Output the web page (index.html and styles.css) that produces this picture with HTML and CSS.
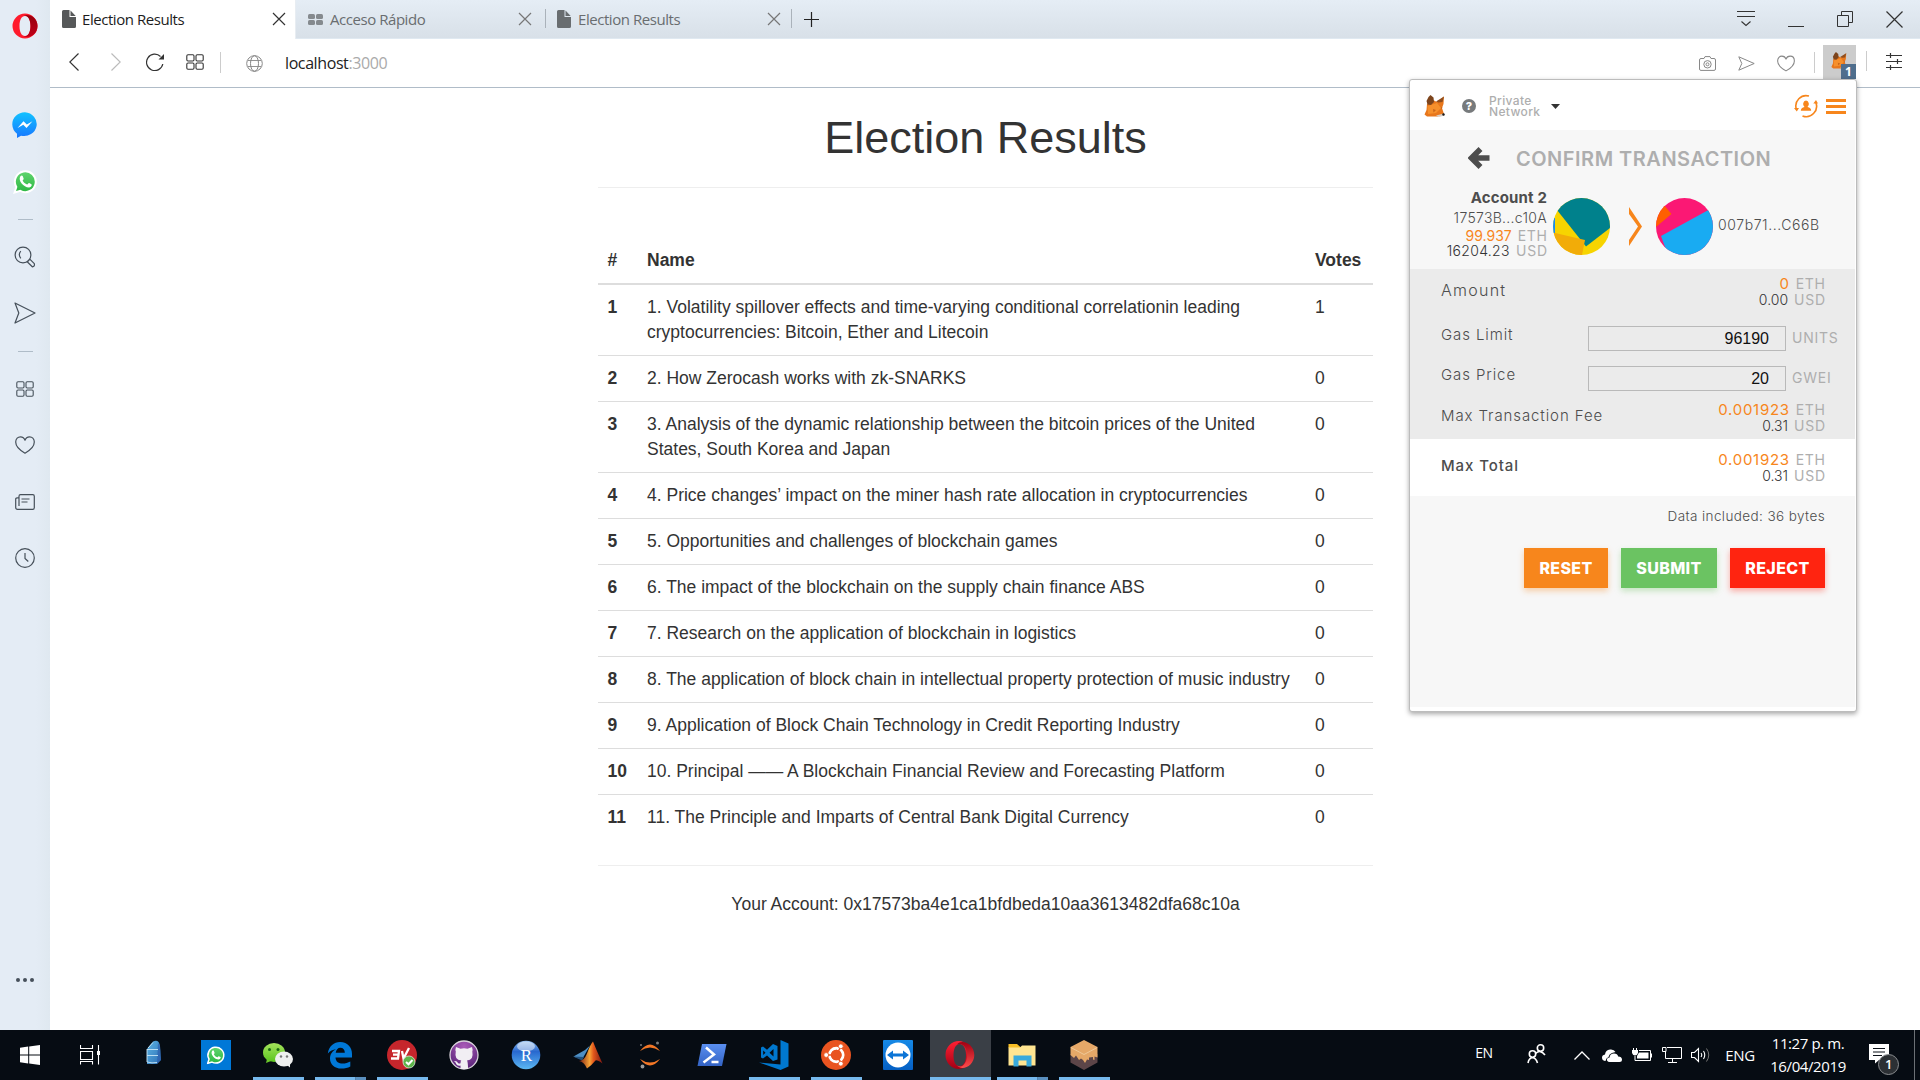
FILE: index.html
```html
<!DOCTYPE html>
<html lang="es">
<head>
<meta charset="utf-8">
<title>Election Results</title>
<link rel="stylesheet" href="styles.css">
</head>
<body>
<svg class="defs" width="0" height="0" aria-hidden="true">
  <defs>
    <linearGradient id="gMsg" x1="0" y1="0" x2="0" y2="1"><stop offset="0" stop-color="#12c2ff"/><stop offset="1" stop-color="#1877ff"/></linearGradient>
    <linearGradient id="gWa" x1="0" y1="0" x2="0" y2="1"><stop offset="0" stop-color="#62d56f"/><stop offset="1" stop-color="#2cb743"/></linearGradient>
    <linearGradient id="gOpR" x1="0" y1="0" x2="0" y2="1"><stop offset="0" stop-color="#96000e"/><stop offset="1" stop-color="#c00018"/></linearGradient>
    <linearGradient id="gOpT" x1="0" y1="0" x2="0" y2="1"><stop offset="0" stop-color="#ff2033"/><stop offset="1" stop-color="#a30014"/></linearGradient>
    <linearGradient id="gOpS" x1="0" y1="0" x2="0" y2="1"><stop offset="0" stop-color="#a00012"/><stop offset="1" stop-color="#ff4b4b"/></linearGradient>
    <linearGradient id="gTower" x1="0" y1="0" x2="1" y2="1"><stop offset="0" stop-color="#5db4e4"/><stop offset="1" stop-color="#2c6fb5"/></linearGradient>
    <linearGradient id="gWx" x1="0" y1="0" x2="0" y2="1"><stop offset="0" stop-color="#a5e45c"/><stop offset="1" stop-color="#5bc41f"/></linearGradient>
    <radialGradient id="gGit" cx=".5" cy=".2" r=".8"><stop offset="0" stop-color="#a95ab8"/><stop offset="1" stop-color="#5a2479"/></radialGradient>
    <linearGradient id="gR" x1="0" y1="0" x2="0" y2="1"><stop offset="0" stop-color="#8fbcec"/><stop offset=".38" stop-color="#2868cf"/><stop offset="1" stop-color="#5cb8f2"/></linearGradient>
    <linearGradient id="gMat" x1="0" y1="0" x2="1" y2="0"><stop offset="0" stop-color="#7a1c10"/><stop offset=".45" stop-color="#f7a437"/><stop offset=".62" stop-color="#e2571c"/><stop offset="1" stop-color="#7d1510"/></linearGradient>
    <linearGradient id="gPs" x1="0" y1="0" x2="0" y2="1"><stop offset="0" stop-color="#5a8ff0"/><stop offset="1" stop-color="#3363c4"/></linearGradient>
    <linearGradient id="gTv" x1="0" y1="0" x2="0" y2="1"><stop offset="0" stop-color="#1689e6"/><stop offset="1" stop-color="#0560c4"/></linearGradient>
    <symbol id="doc" viewBox="0 0 14 18"><path fill="currentColor" d="M1.500 0H7.500V7H14V16.500Q14 18 12.500 18H1.500Q0 18 0 16.500V1.500Q0 0 1.500 0Z"/><path fill="currentColor" d="M8.500 .5V6H13.700Z"/></symbol>
    <symbol id="close" viewBox="0 0 14 14"><path d="M1 1 13 13M13 1 1 13" fill="none" stroke="currentColor" stroke-width="1.200"/></symbol>
    <symbol id="tiles" viewBox="0 0 18 16"><g fill="none" stroke="currentColor" stroke-width="1.100"><rect x=".8" y=".8" width="7.200" height="6.200" rx="1.200"/><rect x="10" y=".8" width="7.200" height="6.200" rx="1.200"/><rect x=".8" y="9" width="7.200" height="6.200" rx="1.200"/><rect x="10" y="9" width="7.200" height="6.200" rx="1.200"/></g></symbol>
    <symbol id="heart" viewBox="0 0 20 18"><path d="M10 17.200C6 15 .7 10.500 .7 6.100C.7 2.600 3 .8 5.400 .8C7.600 .8 9.300 2 10 4.200C10.700 2 12.400 .8 14.600 .8C17 .8 19.300 2.600 19.300 6.100C19.300 10.500 14 15 10 17.200Z" fill="none" stroke="currentColor" stroke-width="1.200" stroke-linejoin="round"/></symbol>
    <symbol id="send" viewBox="0 0 22 22"><path d="M1 1 21 11 1 21 4.800 11Z" fill="none" stroke="currentColor" stroke-width="1.200" stroke-linejoin="round"/></symbol>
    <symbol id="fox" viewBox="0 0 21 22"><path fill="#e8771c" d="M3 9 9 5 13 7 20 1.500 19.500 9 18 13 20 19 14 21.500 3 21.500 .5 19.500 2.500 15Z"/><path fill="#f6902c" d="M3.500 11 13 8 17 13 12 18 4 19Z"/><path fill="#7c441c" d="M6.500 0 9.500 2.500 10 7 7 10 3.500 9.500 2.500 6 4.500 2Z"/><path fill="#8f4d1d" d="M20 1.500 18.500 7 14.500 7.500 12 6.500Z"/><path fill="#c9661c" d="M9 14 12 15 9.500 17.500ZM17 12 18.500 12.500 17 14.500Z"/><path fill="#d8cfc8" d="M12 20.500 19 18.800 20.500 20.500 15 22Z"/><circle cx="19.500" cy="19.500" r="1.200" fill="#1a1a1a"/></symbol>
    <symbol id="waGlyph" viewBox="0 0 24 24"><path d="M1.500 22.500 3.200 17.200A10 10 0 1 1 7 20.900Z" fill="url(#gWa)" stroke="#fff" stroke-width="1.900"/><path fill="#fff" d="M7.100 6.900C8 5.900 8.900 5.900 9.300 6.800L10.200 9C10.500 9.900 9.200 10.400 9.300 11C10.200 13 11.700 14.100 13.500 14.800C14.200 14.900 14.700 13.300 15.500 13.500L17.700 14.600C18.500 15.100 17.500 17.500 15.500 17.700C10.500 17.900 4.300 11 7.100 6.900Z"/></symbol>
  </defs>
</svg>

<div class="screen">
  <aside class="sidebar">
    <div class="side-logo"><svg width="26" height="26" viewBox="0 0 26 26"><path fill="#ff1b2d" fill-rule="evenodd" d="M13 .5A12.500 12.500 0 1 0 13 25.500A12.500 12.500 0 1 0 13 .5ZM13 3C16.500 3 18.500 7 18.500 13S16.500 23 13 23S7.500 19 7.500 13S9.500 3 13 3Z"/><path fill="url(#gOpR)" d="M11.500 2.500C15.500 .8 25.500 3 25.500 13S15.500 25.200 11.500 23.500C16 24 18.500 19 18.500 13S16 2 11.500 2.500Z"/></svg></div>
    <div class="side-item"><svg width="26" height="26" viewBox="0 0 26 26"><path fill="url(#gMsg)" d="M13 .3A12.600 11.900 0 1 1 9 23.700L5 26V21.700A12 12 0 0 1 .3 12.500A12.600 12 0 0 1 13 .3Z"/><path fill="#fff" d="M5.500 16 11.500 9.300 14.800 12.500 20.500 9.300 14.500 16 11.300 12.800Z"/></svg></div>
    <div class="side-item"><svg width="25" height="25"><use href="#waGlyph"/></svg></div>
    <div class="side-rule"></div>
    <div class="side-item"><svg width="22" height="22" viewBox="0 0 22 22"><g fill="none" stroke="currentColor" stroke-width="1.200"><circle cx="9" cy="9" r="7.900"/><path d="M6.800 5.200Q3.800 8.500 6.800 12.300M13.200 15.800 15.800 13.200 20.300 17.700Q21 20.400 18.300 20.800Z" stroke-linejoin="round"/></g></svg></div>
    <div class="side-item"><svg width="22" height="22"><use href="#send"/></svg></div>
    <div class="side-rule"></div>
    <div class="side-item"><svg width="18" height="16"><use href="#tiles"/></svg></div>
    <div class="side-item"><svg width="20" height="18"><use href="#heart"/></svg></div>
    <div class="side-item"><svg width="20" height="16" viewBox="0 0 20 16"><path d="M4 12V2.200Q4 .7 5.500 .7H17.800Q19.300 .7 19.300 2.200V13.800Q19.300 15.300 17.800 15.300H2.500Q.7 15.300 .7 13.500V5Q.7 3.700 4 3.700M6.500 5H14.500M6.500 8H12.500" fill="none" stroke="currentColor" stroke-width="1.200"/></svg></div>
    <div class="side-item"><svg width="20" height="20" viewBox="0 0 20 20"><g fill="none" stroke="currentColor" stroke-width="1.200"><circle cx="10" cy="10" r="9.300"/><path d="M10 5V10.500L13.300 13.500"/></g></svg></div>
    <div class="side-more"><svg width="18" height="4" viewBox="0 0 18 4"><g fill="currentColor"><circle cx="2" cy="2" r="2"/><circle cx="9" cy="2" r="2"/><circle cx="16" cy="2" r="2"/></g></svg></div>
  </aside>

  <div class="browser">
    <div class="tabs">
      <div class="tab tab-active"><svg width="14" height="18"><use href="#doc"/></svg><span>Election Results</span><svg class="tab-close" width="14" height="14"><use href="#close"/></svg></div>
      <div class="tab tab-speed"><svg width="15" height="11" viewBox="0 0 15 11"><g fill="#858a8e"><rect width="7" height="5" rx="1.500"/><rect x="8" width="7" height="5" rx="1.500"/><rect y="6" width="7" height="5" rx="1.500"/><rect x="8" y="6" width="7" height="5" rx="1.500"/></g></svg><span>Acceso Rápido</span><svg class="tab-close" width="14" height="14"><use href="#close"/></svg></div>
      <div class="tab tab-last"><svg width="14" height="18"><use href="#doc"/></svg><span>Election Results</span><svg class="tab-close" width="14" height="14"><use href="#close"/></svg></div>
      <div class="tab-new"><svg width="15" height="15" viewBox="0 0 15 15"><path d="M7.500 0V15M0 7.500H15" stroke="#222" stroke-width="1.200"/></svg></div>
      <div class="window-controls">
        <svg width="18" height="16" viewBox="0 0 18 16"><path d="M0 .5H18M0 5.500H18M4.500 10.500 9 14.500 13.500 10.500" fill="none" stroke="#333" stroke-width="1.100"/></svg>
        <svg width="16" height="16" viewBox="0 0 16 16"><path d="M0 15.500H16" stroke="#333"/></svg>
        <svg width="16" height="16" viewBox="0 0 16 16"><path d="M.5 4.500H11.500V15.500H.5ZM4.500 4V.5H15.500V11.500H12" fill="none" stroke="#333"/></svg>
        <svg width="17" height="17" viewBox="0 0 17 17"><path d="M.5 .5 16.500 16.500M16.500 .5 .5 16.500" stroke="#333" stroke-width="1.200"/></svg>
      </div>
    </div>
    <div class="toolbar">
      <div class="nav">
        <svg width="10" height="18" viewBox="0 0 10 18"><path d="M9.500 .5 .8 9 9.500 17.500" fill="none" stroke="#333" stroke-width="1.200"/></svg>
        <svg width="10" height="18" viewBox="0 0 10 18"><path d="M.5 .5 9.200 9 .5 17.500" fill="none" stroke="#bbb" stroke-width="1.200"/></svg>
        <svg width="18" height="18" viewBox="0 0 18 18"><path d="M14.500 3.500A8.200 8.200 0 1 0 16.800 11" fill="none" stroke="#333" stroke-width="1.200"/><path d="M18 1V6.500H12.500Z" fill="#333"/></svg>
        <svg class="nav-tiles" width="18" height="16"><use href="#tiles"/></svg>
      </div>
      <div class="address">
        <svg width="17" height="17" viewBox="0 0 17 17"><g fill="none" stroke="#888"><circle cx="8.500" cy="8.500" r="7.800"/><ellipse cx="8.500" cy="8.500" rx="4" ry="7.800"/><path d="M1.800 5.500H15.200M1.800 11.500H15.200" stroke-width=".9"/></g></svg>
        <span class="url">localhost<span>:3000</span></span>
      </div>
      <div class="tools">
        <svg width="17" height="15" viewBox="0 0 17 15"><g fill="none" stroke="#888"><path d="M2 2.500H5L6 .6H11L12 2.500H15Q16.500 2.500 16.500 4V13Q16.500 14.400 15 14.400H2Q.5 14.400 .5 13V4Q.5 2.500 2 2.500Z"/><circle cx="8.500" cy="8.300" r="3.700"/><circle cx="8.500" cy="8.300" r="1.500"/></g></svg>
        <svg width="17" height="15" viewBox="0 0 17 15"><path d="M.8 .8 16.200 7.500 .8 14.200 3.800 7.500Z" fill="none" stroke="#888" stroke-linejoin="round"/></svg>
        <svg width="18" height="17"><use href="#heart"/></svg>
      </div>
      <div class="extension"><svg width="16" height="17"><use href="#fox"/></svg><b>1</b></div>
      <div class="settings"><svg width="16" height="17" viewBox="0 0 16 17"><path d="M0 2.500H16M0 8.500H16M0 14.500H16M4.500 0V5M11.500 6V11M4.500 12V17" stroke="#333" stroke-width="1.200"/></svg></div>
    </div>

    <main class="page">
      <div class="container">
        <h1>Election Results</h1>
        <hr>
        <table class="results">
          <colgroup><col class="c-num"><col><col class="c-votes"></colgroup>
          <thead><tr><th>#</th><th>Name</th><th>Votes</th></tr></thead>
          <tbody>
            <tr><th>1</th><td>1. Volatility spillover effects and time-varying conditional correlationin leading cryptocurrencies: Bitcoin, Ether and Litecoin</td><td>1</td></tr>
            <tr><th>2</th><td>2. How Zerocash works with zk-SNARKS</td><td>0</td></tr>
            <tr><th>3</th><td>3. Analysis of the dynamic relationship between the bitcoin prices of the United States, South Korea and Japan</td><td>0</td></tr>
            <tr><th>4</th><td>4. Price changes’ impact on the miner hash rate allocation in cryptocurrencies</td><td>0</td></tr>
            <tr><th>5</th><td>5. Opportunities and challenges of blockchain games</td><td>0</td></tr>
            <tr><th>6</th><td>6. The impact of the blockchain on the supply chain finance ABS</td><td>0</td></tr>
            <tr><th>7</th><td>7. Research on the application of blockchain in logistics</td><td>0</td></tr>
            <tr><th>8</th><td>8. The application of block chain in intellectual property protection of music industry</td><td>0</td></tr>
            <tr><th>9</th><td>9. Application of Block Chain Technology in Credit Reporting Industry</td><td>0</td></tr>
            <tr><th>10</th><td>10. Principal —— A Blockchain Financial Review and Forecasting Platform</td><td>0</td></tr>
            <tr><th>11</th><td>11. The Principle and Imparts of Central Bank Digital Currency</td><td>0</td></tr>
          </tbody>
        </table>
        <hr>
        <p class="account">Your Account: 0x17573ba4e1ca1bfdbeda10aa3613482dfa68c10a</p>
      </div>
    </main>
  </div>

  <section class="wallet">
    <header class="w-head">
      <svg class="w-fox" width="21" height="22"><use href="#fox"/></svg>
      <span class="w-help">?</span>
      <span class="w-net">Private<br>Network</span>
      <svg class="w-caret" width="9" height="5" viewBox="0 0 9 5"><path d="M0 0H9L4.500 5Z" fill="#333"/></svg>
      <svg class="w-switch" width="24" height="24" viewBox="0 0 24 24"><g fill="none" stroke="#f7861c" stroke-width="1.600"><path d="M2.300 15A10.300 10.300 0 0 1 15 2.100M8.500 21.900A10.300 10.300 0 0 0 21.800 8.500"/></g><path fill="#f7861c" d="M0 14H5L2.800 17.500ZM19.300 9.500H24L22 6ZM12 6.500A3.300 3.600 0 0 1 13.500 13Q17 13.500 17.200 16.800H6.800Q7 13.500 10.500 13A3.300 3.600 0 0 1 12 6.500Z"/></svg>
      <svg width="20" height="15" viewBox="0 0 20 15"><path d="M0 1.500H20M0 7.500H20M0 13.500H20" stroke="#f7861c" stroke-width="2.800"/></svg>
    </header>
    <div class="w-title">
      <svg width="23" height="24" viewBox="0 0 23 24"><path d="M12.500 3 3.500 12 12.500 21M4 12H21.500" fill="none" stroke="#4d4d4d" stroke-width="5.500"/></svg>
      <h2>CONFIRM TRANSACTION</h2>
    </div>
    <div class="w-parties">
      <div class="w-from">
        <b class="t-acc">Account 2</b>
        <span class="t-addr">17573B...c10A</span>
        <span class="t-eth"><em>99.937</em> <i>ETH</i></span>
        <span class="t-usd">16204.23 <i>USD</i></span>
      </div>
      <svg width="57" height="57" viewBox="0 0 57 57"><clipPath id="c1"><circle cx="28.500" cy="28.500" r="28.500"/></clipPath><g clip-path="url(#c1)"><rect width="57" height="57" fill="#f7d400"/><path fill="#00818c" d="M4 12 0 0H57V30L33 48.500 27 41Z"/><path fill="#f2ac08" d="M0 34.500 32 42 29 57H0Z"/><path fill="#1a8cf0" d="M0 20H2V35H0Z"/></g></svg>
      <svg class="w-arrow" width="13" height="39" viewBox="0 0 13 39"><path fill="#f7861c" d="M0 0 13 19.500 0 39V33L9 19.500 0 7Z"/></svg>
      <svg width="57" height="57" viewBox="0 0 57 57"><clipPath id="c2"><circle cx="28.500" cy="28.500" r="28.500"/></clipPath><g clip-path="url(#c2)"><rect width="57" height="57" fill="#fb1874"/><path fill="#ff5f00" d="M0 0 8 7 15.500 16 0 29Z"/><path fill="#19abf2" d="M57 9.500 5 38 12 57H57Z"/></g></svg>
      <span class="w-to">007b71...C66B</span>
    </div>
    <div class="w-fees">
      <div class="w-row r-amount"><label>Amount</label><div class="w-val"><span class="v-eth"><em>0</em> <i>ETH</i></span><span class="v-usd">0.00 <i>USD</i></span></div></div>
      <div class="w-row r-limit"><label>Gas Limit</label><div class="w-input">96190</div><i class="unit">UNITS</i></div>
      <div class="w-row r-price"><label>Gas Price</label><div class="w-input">20</div><i class="unit">GWEI</i></div>
      <div class="w-row r-fee"><label>Max Transaction Fee</label><div class="w-val"><span class="v-eth"><em>0.001923</em> <i>ETH</i></span><span class="v-usd">0.31 <i>USD</i></span></div></div>
    </div>
    <div class="w-row r-total"><label>Max Total</label><div class="w-val"><span class="v-eth"><em>0.001923</em> <i>ETH</i></span><span class="v-usd">0.31 <i>USD</i></span></div></div>
    <div class="w-foot">
      <p>Data included: 36 bytes</p>
      <div class="w-buttons"><span class="btn b-reset">RESET</span><span class="btn b-submit">SUBMIT</span><span class="btn b-reject">REJECT</span></div>
    </div>
  </section>

  <footer class="taskbar">
    <div class="task task-sys"><svg width="20" height="20" viewBox="0 0 20 20"><path fill="#fff" d="M0 2.800 8.200 1.600V9.500H0ZM9.200 1.500 20 0V9.500H9.200ZM0 10.500H8.200V18.400L0 17.200ZM9.200 10.500H20V20L9.200 18.500Z"/></svg></div>
    <div class="task task-view"><svg width="20" height="20" viewBox="0 0 20 20"><path d="M.5 0V3.500H12.500V0M.5 6.500H12.500V14.500H.5ZM.5 19.500V16.500H12.500V19.500M18.500 0V19.500" fill="none" stroke="#fff" stroke-width="1.100"/><rect x="17" y="6" width="3" height="4" fill="#fff"/></svg></div>
    <div class="task"><svg width="30" height="30" viewBox="0 0 30 30"><path fill="url(#gTower)" d="M8 9 14 1.500Q20-1 21 6L22 20 18 24H8Z"/><path fill="#2a56a8" d="M19 3 21 6 22 20 18 24Z" opacity=".6"/><path d="M8 9.500H19M8 15.500H19M8 9V22Q13 23.500 18 22.500M9 8 14 2.500" fill="none" stroke="#c7e6f7" stroke-width=".9"/></svg></div>
    <div class="task"><svg width="30" height="30" viewBox="0 0 30 30"><rect width="30" height="30" fill="#0078d7"/><svg x="5.500" y="5.500" width="19" height="19"><use href="#waGlyph"/></svg></svg></div>
    <div class="task task-open"><svg width="32" height="30" viewBox="0 0 32 30"><ellipse cx="12" cy="12.500" rx="11" ry="9.500" fill="url(#gWx)"/><path fill="#6cc92c" d="M5 19 4 23 9 21Z"/><circle cx="7.500" cy="9.500" r="1.500" fill="#1c6b12"/><circle cx="16" cy="9.500" r="1.500" fill="#1c6b12"/><ellipse cx="22" cy="19" rx="9" ry="7.600" fill="#eef0ef"/><path fill="#eef0ef" d="M25 25 28 27.500 28 23Z"/><circle cx="19" cy="16.500" r="1.200" fill="#777"/><circle cx="25" cy="16.500" r="1.200" fill="#777"/></svg></div>
    <div class="task task-open task-multi"><svg width="26" height="28" viewBox="0 0 26 28"><path fill="#0078d7" d="M.8 12.500C2 5 7 1 13 1C21 1 25 7 25 13V16.500H8.500C8.700 21 12 22.600 15.500 22.600C18.500 22.600 21 21.800 23.300 20.500V25.500C20.800 27 17.800 27.600 14.500 27.600C7.500 27.600 3 23.500 3 17.500C3 13 5.500 10 9 8.200C6 8.500 3 9.900 .8 12.500ZM8.700 11.800H17.800C17.800 8.700 16.300 6.700 13.300 6.700C10.800 6.700 9.200 8.800 8.700 11.800Z"/></svg></div>
    <div class="task task-open"><svg width="30" height="30" viewBox="0 0 30 30"><circle cx="15" cy="15" r="15" fill="#c6262c"/><path d="M5 11H12L11 18.500H4M6 14.700H11M15 11 16.500 18.500 22 8" fill="none" stroke="#fff" stroke-width="2.300"/><circle cx="22" cy="22" r="6" fill="#5eb54b" stroke="#d7ead4" stroke-width=".8"/><path d="M19 22 21.500 24.300 25.500 20" fill="none" stroke="#fff" stroke-width="2"/></svg></div>
    <div class="task"><svg width="30" height="30" viewBox="0 0 30 30"><circle cx="15" cy="15" r="14" fill="url(#gGit)" stroke="#d9d4dc" stroke-width="1.300"/><path fill="#f1eef3" d="M7 7 11.500 8.700Q15 8 18.500 8.700L23 7Q24 10 23.300 11.500Q25 20 18 20.500Q19 22 19 29H11.500V25.500Q8 26.500 6.500 22.500L5 21Q8 20.500 9 23Q10 24 11.500 23.300Q11.500 21.300 12.300 20.500Q5 20 6.800 11.500Q6 10 7 7Z"/></svg></div>
    <div class="task"><svg width="30" height="30" viewBox="0 0 30 30"><circle cx="15" cy="15" r="14.300" fill="url(#gR)"/><ellipse cx="15" cy="6.500" rx="9" ry="5" fill="#fff" opacity=".5"/><text x="15.500" y="20.500" class="r-letter">R</text></svg></div>
    <div class="task"><svg width="30" height="30" viewBox="0 0 30 30"><path fill="#4d8fc4" d="M.5 16.500 12 10 17 5.500 9 19.500Z"/><path fill="#23517c" d="M0 16.500 9 20.500 11 17Z"/><path fill="url(#gMat)" d="M6 21Q11 21 14 13.500Q17.500 4 20 1.500Q23 9 29.500 23.500Q24 19.500 22.500 20.500Q18 26 14 28.500Q11 21.500 6 21Z"/></svg></div>
    <div class="task"><svg width="22" height="28" viewBox="0 0 22 28"><path fill="#f37726" d="M1 10Q11-3 21 10Q11 3 1 10ZM1 18Q11 31 21 18Q11 25 1 18Z"/><g fill="#7a7a7a"><circle cx="18.500" cy="2" r="1.500"/><circle cx="3.500" cy="25.500" r="1.900" fill="#9b9b9b"/><circle cx="2" cy="4" r="1"/></g></svg></div>
    <div class="task"><svg width="30" height="22" viewBox="0 0 30 22"><path fill="url(#gPs)" d="M5 0H29.500L25 22H.5Z"/><path d="M9 3.500 17 10.500 6.500 18.500M14.500 18H21.500" fill="none" stroke="#fff" stroke-width="2.500"/></svg></div>
    <div class="task task-open"><svg width="30" height="30" viewBox="0 0 30 30"><path fill="#0078cf" fill-rule="evenodd" d="M21.500 0 29.500 3.500V26.500L21.500 30 0 22.500 21.500 24.500ZM2 7.500 4 6.500 8 9.700 14 4 18.500 6V19.500L14 21 8 15.500 4 18.500 2 17.500V9ZM14.500 9 10.500 12.700 14.500 16.500ZM4.200 10.500V15L6.500 12.700Z"/></svg></div>
    <div class="task task-open"><svg width="30" height="30" viewBox="0 0 30 30"><circle cx="15" cy="15" r="15" fill="#e95420"/><circle cx="15.300" cy="15" r="6.800" fill="none" stroke="#fff" stroke-width="2.900"/><path d="M15.300 15H4M15.300 15 20.500 5.500M15.300 15 21 24.500" stroke="#e95420" stroke-width="1.500"/><circle cx="15.300" cy="15" r="5.300" fill="#e95420"/><g fill="#fff" stroke="#e95420" stroke-width=".8"><circle cx="5.200" cy="15" r="2.400"/><circle cx="19.800" cy="6.300" r="2.400"/><circle cx="19.800" cy="23.700" r="2.400"/></g></svg></div>
    <div class="task"><svg width="30" height="30" viewBox="0 0 30 30"><rect width="30" height="30" rx="1" fill="url(#gTv)"/><circle cx="15" cy="15" r="12.500" fill="#fff"/><path fill="#0d75d6" d="M4 15 10 10.500V13.500H20V10.500L26 15 20 19.500V16.500H10V19.500Z"/></svg></div>
    <div class="task task-open task-current"><svg width="30" height="30" viewBox="0 0 30 30"><path fill="url(#gOpT)" fill-rule="evenodd" d="M14 1A13.500 14 0 1 0 14 29C20 29 25 23 25 15S20 1 14 1ZM14.500 4C19 4 21 9 21 15S19 26 14.500 26S8.500 21 8.500 15S10.500 4 14.500 4Z"/><path fill="url(#gOpS)" d="M12 4.500C17 -1.500 29.300 4 29.300 15S17 31.500 12 25.500C18 29 22 22 22 15S18 2 12 4.500Z"/></svg></div>
    <div class="task task-open task-multi"><svg width="28" height="24" viewBox="0 0 28 24"><path fill="#f8bf26" d="M.5 1H9L13.500 5H.5Z"/><path fill="#ffe591" d="M.5 4.500H12L14 2.500H27.500V22.500H.5Z"/><path fill="#38aadc" d="M5.500 12.500H23.500V23.500H18.500V17.500H10.500V23.500H5.500Z"/></svg></div>
    <div class="task task-open"><svg width="28" height="30" viewBox="0 0 28 30"><path fill="#5c4548" d="M.5 14 27.500 14V22.500L14 30 .5 22.500Z"/><path fill="#e5a868" d="M14 0 27.500 7V17.500L24.500 16.500V20L23 19.500V17L19 17.500V20L17 19.500 15 23 13 20 11 18.500 9 20 6 15.500 4 18 .5 15V7Z"/><path d="M.8 7.500 14 14.500 27.200 7.500" fill="none" stroke="#f0d0a4" stroke-width=".8"/></svg></div>

    <div class="tray">
      <span class="t-en">EN</span>
      <span class="t-people"><svg width="20" height="20" viewBox="0 0 20 20"><g fill="none" stroke="#fff" stroke-width="1.600"><circle cx="13.500" cy="4" r="3.200"/><path d="M8.500 9.500Q13.500 5 18 11"/><circle cx="5.500" cy="10" r="3.200"/><path d="M1 19Q2 13.700 5.500 13.700T10.500 19"/></g></svg></span>
      <span class="t-up"><svg width="16" height="9" viewBox="0 0 16 9"><path d="M.5 8.500 8 1 15.500 8.500" fill="none" stroke="#fff" stroke-width="1.300"/></svg></span>
      <span class="t-cloud"><svg width="20" height="13" viewBox="0 0 20 13"><path fill="#fff" d="M3 12Q0 11.500 0 8.500Q0 6 3 5.500Q3.500 1 8 .5Q12 0 13.500 3L10 4Q7 5 6.500 8Q4 9 3.500 12ZM7.500 13Q4.500 12.500 5 10Q5.500 8.500 7.500 8.500Q8 4.500 12 4.500Q15.500 4.500 16.200 7.500Q19.800 7.500 20 10.500Q20 13 17.500 13Z"/></svg></span>
      <span class="t-batt"><svg width="20" height="14" viewBox="0 0 20 14"><path d="M7 2.500H18.500V12.500H3V8" fill="none" stroke="#fff"/><path fill="#fff" d="M7 4.500H16.500V10.500H5V8ZM19 5.500H20V9.500H19ZM0 2H6V5Q5 7.500 3 7.500Q1 7.500 0 5ZM1 0H2V2H1ZM4 0H5V2H4Z"/></svg></span>
      <span class="t-mon"><svg width="20" height="16" viewBox="0 0 20 16"><path d="M5 .5H19.500V11.500H3.500V5M.5 .5H4V4.500H.5ZM10.500 12V15M6 15.500H15" fill="none" stroke="#fff"/></svg></span>
      <span class="t-vol"><svg width="20" height="16" viewBox="0 0 20 16"><path d="M.5 5.500H3.500L7.500 1.500V14.500L3.500 10.500H.5ZM10 6Q11.500 8 10 10M12.500 4Q15 8 12.500 12" fill="none" stroke="#fff" stroke-width="1.100"/><path d="M15.500 1.500Q20 8 15.500 14.500" fill="none" stroke="#777"/></svg></span>
      <span class="t-eng">ENG</span>
      <span class="t-clock">11:27 p. m.<br>16/04/2019</span>
      <span class="t-note"><svg width="20" height="20" viewBox="0 0 20 20"><path fill="#fff" d="M0 0H20V16H10L6 19.500V16H0Z"/><path d="M4 4.500H16M4 8H16M4 11.500H13" stroke="#0b1018" stroke-width="1.200"/></svg><b>1</b></span>
    </div>
  </footer>
</div>
</body>
</html>
```
FILE: styles.css
```css
* { box-sizing: border-box; }
body { margin: 0; background: #fff; overflow: hidden; font-family: "Liberation Sans", Arial, sans-serif; }
svg { display: block; flex: none; }
i, em { font-style: normal; }
.defs { position: absolute; }

.screen {
  position: relative;
  width: 1920px;
  height: 1080px;
  display: grid;
  grid-template: 1030px 50px / 50px 1870px;
}

/* Sidebar */
.sidebar {
  display: flex;
  flex-direction: column;
  align-items: center;
  color: #46505a;
  background: linear-gradient(90deg, #e4ecf5 0, #e4ecf5 72%, #dfe8f0 100%);
}
.side-logo { height: 96.500px; padding: 12.500px 0 0; }
.side-item { height: 56.500px; display: flex; align-items: center; justify-content: center; }
.side-rule { height: 19px; width: 15px; display: flex; align-items: center; margin-left: 1px; }
.side-rule::before { content: ""; height: 1px; width: 15px; background: #afbcc8; }
.side-more { margin: auto 0 48px; }

/* Tab strip */
.browser { display: flex; flex-direction: column; min-width: 0; }
.tabs {
  height: 39px;
  display: flex;
  background: linear-gradient(#e5edf5, #d8e0e8);
  border-bottom: 1px solid #e0e9f1;
  font: 15px/38px "Open Sans", "Noto Sans", sans-serif;
  letter-spacing: -.45px;
  color: #5d6163;
}
.tab { display: flex; align-items: center; position: relative; color: #696d70; }
.tab span { margin-left: 7px; }
.tab-close { margin-left: auto; color: #777; }
.tab-active { width: 246px; height: 39px; padding: 0 9px 1px 12px; background: #fff; color: #565859; border-right: 1px solid #e8edf2; }
.tab-active span { margin-left: 6px; color: #1c1c1c; }
.tab-active .tab-close { color: #333; }
.tab-speed { width: 250px; padding: 0 14px 0 12px; }
.tab-last { width: 246px; padding: 0 11px 0 11px; }
.tab-speed::after, .tab-last::after { content: ""; position: absolute; right: 0; top: 9px; width: 1px; height: 19px; background: #aab2ba; }
.tab-new { padding: 12px 0 0 12px; }
.window-controls { display: flex; gap: 33px; padding: 11px 17px 0 0; margin-left: auto; }

/* Toolbar */
.toolbar { height: 49px; display: flex; border-bottom: 1px solid #b0bcc8; }
.nav { width: 171px; display: flex; align-items: center; padding: 0 0 3px 19px; gap: 30px; color: #333; }
.nav svg:nth-child(2) { margin-left: 2px; }
.nav svg:nth-child(3) { margin-left: -5px; }
.nav .nav-tiles { margin-left: -8px; }
.address { display: flex; align-items: center; padding-left: 25px; position: relative; flex: 1; }
.address::before { content: ""; position: absolute; left: -1px; top: 13px; width: 1px; height: 21px; background: #ccc; }
.url { margin-left: 22px; font: 400 16px/24px "Open Sans", sans-serif; letter-spacing: -.4px; color: #222; }
.url span { color: #aaa; }
.tools { display: flex; align-items: center; gap: 22px; color: #888; padding-right: 20px; position: relative; }
.tools::after { content: ""; position: absolute; right: 0; top: 13px; width: 1px; height: 21px; background: #ccc; }
.extension { width: 33px; height: 34px; margin: 6px 0 0 8px; padding: 7px 0 0 8px; background: #ccc; position: relative; }
.extension b { position: absolute; right: 0; bottom: 0; width: 15px; height: 15px; background: #4f6e8d; color: #fff; font: 700 12px/15px "Open Sans", sans-serif; text-align: center; }
.settings { width: 64px; position: relative; padding: 14px 0 0 30px; }
.settings::before { content: ""; position: absolute; left: 10px; top: 12px; width: 1px; height: 20px; background: #ccc; }

/* Page */
.page { flex: 1; color: #333; font-size: 17.500px; line-height: 25px; }
.container { width: 775px; margin-left: 548px; padding-top: 25px; }
h1 { margin: 0 0 24px; font-size: 45px; line-height: 50px; font-weight: 400; text-align: center; }
hr { margin: 0; border: 0; border-top: 1px solid #eee; }
.results { width: 775px; margin: 50px 0 25px; border-collapse: separate; border-spacing: 0; table-layout: fixed; }
.c-num { width: 39.500px; }
.c-votes { width: 67.500px; }
.results th, .results td { padding: 10px 10px 10px 9.500px; text-align: left; vertical-align: top; border-top: 1px solid #ddd; }
.results thead th { border-top: 0; border-bottom: 2px solid #ddd; }
.results tbody tr:first-child > * { border-top: 0; }
.account { margin: 26px 0 0; text-align: center; }

/* Wallet popup */
.wallet {
  position: absolute;
  left: 1409px;
  top: 79px;
  width: 447.500px;
  height: 633px;
  border: 1px solid #bcbcbc;
  border-radius: 3px;
  box-shadow: 0 2px 5px rgba(0, 0, 0, .35);
  background: #fff;
  font: 300 14px/16px Inter, "Open Sans", sans-serif;
  color: #4d4d4d;
}
.wallet i { color: #aeaeae; font-weight: 400; letter-spacing: .75px; margin-right: -.75px; }
.wallet em { color: #f7861c; font-weight: 400; }
.w-head { height: 50px; display: flex; align-items: center; padding: 2px 10px 0 14px; }
.w-help { width: 14px; height: 14px; margin-left: 17px; border-radius: 50%; background: #777a7c; color: #fff; font: 800 11px/14px Inter, sans-serif; text-align: center; }
.w-net { margin-left: 13px; width: 54px; font-size: 12px; line-height: 11px; font-weight: 500; letter-spacing: .35px; color: #aeaeae; white-space: nowrap; }
.w-caret { margin-left: 8px; }
.w-switch { margin: 0 8px 0 auto; }
.w-title { height: 56px; display: flex; align-items: center; padding-left: 58px; background: #f7f7f7; }
.w-title svg { margin-top: -1px; }
.w-title h2 { margin: 2px 0 0 25px; font-size: 20px; line-height: 24px; font-weight: 600; letter-spacing: .5px; color: #aeaeae; white-space: nowrap; }
.w-title, .w-parties, .w-fees, .w-foot { width: 445px; }
.w-parties { height: 83px; display: flex; background: #f7f7f7; padding-top: 12px; }
.w-from { width: 137px; display: flex; flex-direction: column; align-items: flex-end; margin-right: 6px; margin-top: -13px; }
.w-from span, .w-from b, .w-val span { white-space: nowrap; }
.t-acc { font-size: 15px; line-height: 20px; font-weight: 700; letter-spacing: .15px; margin-top: 3px; }
.t-addr { line-height: 20px; letter-spacing: .3px; }
.t-eth { line-height: 15px; }
.t-usd { line-height: 16px; }
.t-eth i, .t-usd i, .w-val i { margin-left: 2px; }
.t-usd { color: #333; letter-spacing: .3px; }
.w-arrow { margin: 9px 18px 0 19px; }
.w-parties svg:nth-of-type(3) { margin-right: 5px; margin-left: -4px; }
.w-to { margin-top: 19px; letter-spacing: .6px; }
.w-fees { background: #ebebeb; }
.w-row { display: flex; align-items: center; padding: 0 30px 0 31px; }
.w-row label { font-size: 15px; letter-spacing: .9px; margin-top: -4px; white-space: nowrap; }
.w-row.r-amount label { font-size: 16px; letter-spacing: 1.250px; }
.w-val { margin-left: auto; display: flex; flex-direction: column; align-items: flex-end; }
.v-eth em { font-size: 15px; letter-spacing: .7px; }
.v-usd { color: #333; }
.r-amount { height: 46px; }
.r-limit { height: 46px; padding-right: 0; }
.r-price { height: 36px; padding-right: 0; padding-bottom: 2px; }
.r-fee { height: 42px; }
.w-row.r-limit label, .w-row.r-price label { width: 147px; margin-top: -7px; }
.w-input { width: 198px; height: 25px; border: 1px solid #b9b9b9; padding-right: 16px; text-align: right; font: 16px/23px "Liberation Sans", sans-serif; color: #111; }
.unit { margin-left: 6px; }
.r-total { height: 57px; width: 445px; }
.r-total label { font-weight: 500; }
.w-foot { height: 211px; background: #f7f7f7; padding: 12px 30px 0 0; }
.w-foot p { margin: 0 0 24px; text-align: right; font-size: 13.500px; letter-spacing: .4px; }
.w-buttons { display: flex; justify-content: flex-end; gap: 13px; }
.btn { height: 40px; font-size: 16px; line-height: 40px; font-weight: 800; letter-spacing: .35px; color: #fff; text-align: center; }
.b-reset { width: 84px; background: #f7861c; box-shadow: 0 3px 6px rgba(247, 134, 28, .36); }
.b-submit { width: 96px; background: #6bc362; box-shadow: 0 3px 6px rgba(107, 195, 98, .36); }
.b-reject { width: 95px; background: #ff2410; box-shadow: 0 3px 6px rgba(255, 36, 16, .36); }

/* Taskbar */
.taskbar { grid-column: 1 / 3; display: flex; background: #060c13; color: #fff; }
.task { width: 62px; height: 50px; display: flex; align-items: center; justify-content: center; position: relative; }
.task-sys, .task-view { width: 60px; }
.task-view { margin-right: 3px; }
.task-open::after { content: ""; position: absolute; left: 6px; bottom: 0; width: 51px; height: 3px; background: #76b9ed; }
.task-multi::after { background: linear-gradient(90deg, #76b9ed 40px, #4c7597 40px, #5a90bf 41px); }
.task-current::before { content: ""; position: absolute; left: 1px; top: 0; width: 61px; height: 50px; background: #3a3f46; }
.task-current::after { left: 1px; width: 61px; }
.task-current svg { position: relative; }
.r-letter { font: 17px "Liberation Serif", serif; fill: #fff; text-anchor: middle; }
.tray { margin-left: auto; display: flex; align-items: center; width: 458px; font: 15px/23px "Open Sans", sans-serif; }
.tray > span { height: 50px; display: flex; align-items: center; justify-content: center; flex: none; letter-spacing: -.4px; white-space: nowrap; }
.tray .t-en { width: 44px; font-size: 14px; padding-bottom: 5px; }
.t-people { width: 62px; padding-bottom: 2px; }
.t-up { width: 28px; }
.t-cloud { width: 32px; }
.t-batt { width: 28px; }
.t-mon { width: 32px; }
.t-vol { width: 26px; }
.t-eng { width: 52px; }
.t-clock { width: 84px; text-align: center; }
.t-note { width: 65px; position: relative; border-right: 1px solid #6b7075; }
.t-note svg { margin: -2px 7px 0 0; }
.t-note b { position: absolute; left: 28px; top: 24px; width: 21px; height: 21px; border-radius: 50%; border: 1px solid #8a8d90; background: #2c3034; font: 600 13px/19px "Open Sans", sans-serif; text-align: center; }
```
